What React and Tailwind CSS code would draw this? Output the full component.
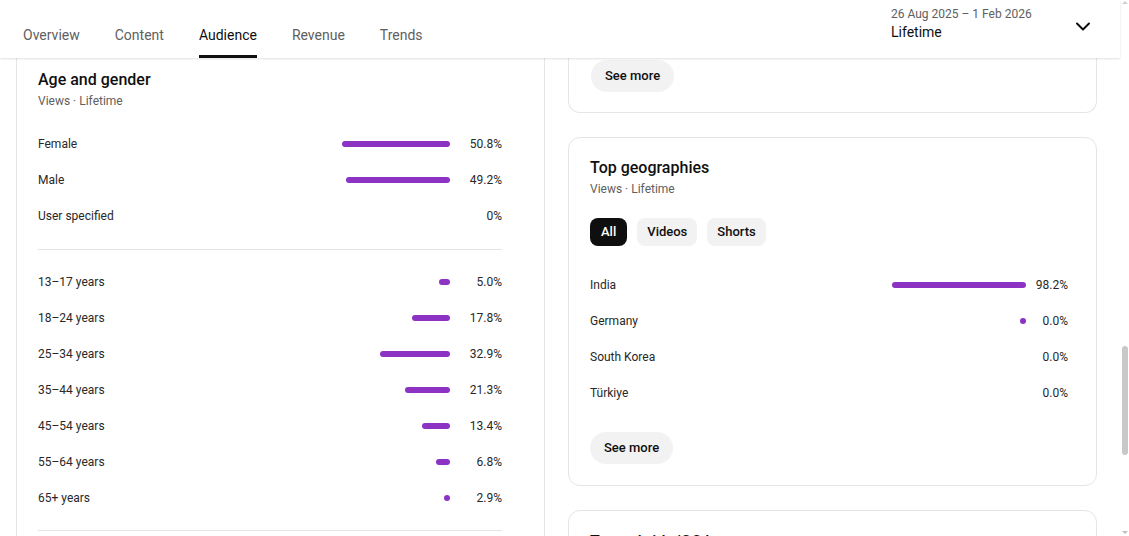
import React from "react";

const gender = [
  { label: "Female", pct: 50.8, text: "50.8%" },
  { label: "Male", pct: 49.2, text: "49.2%" },
  { label: "User specified", pct: 0, text: "0%" },
];

const ages = [
  { label: "13–17 years", pct: 5.0 },
  { label: "18–24 years", pct: 17.8 },
  { label: "25–34 years", pct: 32.9 },
  { label: "35–44 years", pct: 21.3 },
  { label: "45–54 years", pct: 13.4 },
  { label: "55–64 years", pct: 6.8 },
  { label: "65+ years", pct: 2.9 },
];

const geos = [
  { label: "India", w: 134, text: "98.2%" },
  { label: "Germany", w: 6, text: "0.0%" },
  { label: "South Korea", w: 0, text: "0.0%" },
  { label: "Türkiye", w: 0, text: "0.0%" },
];

function Bar({ w }) {
  if (!w) return null;
  return <div className="h-[6px] rounded-full bg-[#8c33c4]" style={{ width: `${w}px` }} />;
}

function AgeRow({ label, w, text }) {
  return (
    <div className="flex h-[36px] items-center text-[12px] text-[#282828]">
      <div className="flex-1">{label}</div>
      <Bar w={w} />
      <div className="w-[52px] text-right">{text}</div>
    </div>
  );
}

function GeoRow({ label, w, text }) {
  return (
    <div className="flex h-[36px] items-center text-[12px] text-[#282828]">
      <div className="flex-1">{label}</div>
      <Bar w={w} />
      <div className="w-[42px] text-right">{text}</div>
    </div>
  );
}

function SeeMore() {
  return (
    <button className="h-8 rounded-full bg-[#f2f2f2] px-[14px] text-[13px] font-medium text-[#0f0f0f]">
      See more
    </button>
  );
}

const tabs = ["Overview", "Content", "Audience", "Revenue", "Trends"];

export default function App() {
  return (
    <div className="flex h-[536px] w-[1129px] overflow-hidden bg-white font-['Roboto',sans-serif] text-[#0f0f0f]">
      <div className="flex w-[1120px] flex-col">
        {/* Header */}
        <div className="relative z-10 flex h-[58px] shrink-0 bg-white shadow-[0_1px_2px_rgba(0,0,0,0.12)]">
          <div className="flex gap-[35px] pl-[23px]">
            {tabs.map((t) => {
              const active = t === "Audience";
              return (
                <div key={t} className="flex flex-col pt-[25px]">
                  <div
                    className={
                      active
                        ? "text-[14px] leading-[20px] text-[#0f0f0f]"
                        : "text-[14px] leading-[20px] text-[#606060]"
                    }
                  >
                    {t}
                  </div>
                  <div className={active ? "mt-[10px] h-[3px] bg-[#0f0f0f]" : "mt-[10px] h-[3px]"} />
                </div>
              );
            })}
          </div>
          <div className="ml-auto flex pr-[25px] pt-[6px]">
            <div className="w-[180px]">
              <div className="text-[12px] leading-[16px] text-[#606060]">26 Aug 2025 – 1 Feb 2026</div>
              <div className="text-[14px] leading-[20px] text-[#0f0f0f]">Lifetime</div>
            </div>
            <div className="mt-[8px] h-6 w-6">
              <svg viewBox="0 0 24 24" width="24" height="24" fill="none" stroke="#0f0f0f" strokeWidth="2" strokeLinecap="round" strokeLinejoin="round">
                <polyline points="6 9.5 12 15.5 18 9.5" />
              </svg>
            </div>
          </div>
        </div>

        {/* Content */}
        <div className="flex gap-[23px] pl-[16px]">
          {/* Left card */}
          <div className="w-[529px] shrink-0 self-start border-x border-[#e5e5e5] pl-[21px] pr-[42px] pt-[10px]">
            <div className="text-[16px] leading-[24px] font-medium">Age and gender</div>
            <div className="mt-[1px] text-[12px] leading-[16px] text-[#606060]">Views · Lifetime</div>
            <div className="mt-[17px]">
              {gender.map((g) => (
                <AgeRow key={g.label} label={g.label} w={g.pct ? Math.max(6, g.pct * 2.12) : 0} text={g.text} />
              ))}
            </div>
            <div className="mt-[15px] h-px bg-[#e5e5e5]" />
            <div className="mt-[14px]">
              {ages.map((a) => (
                <AgeRow key={a.label} label={a.label} w={Math.max(6, a.pct * 2.12)} text={`${a.pct.toFixed(1)}%`} />
              ))}
            </div>
            <div className="mt-[14px] h-px bg-[#e5e5e5]" />
            <div className="h-[40px]" />
          </div>

          {/* Right column */}
          <div className="flex w-[529px] shrink-0 flex-col gap-[24px]">
            <div className="rounded-b-xl border-x border-b border-[#e5e5e5] pb-[20px] pl-[22px] pt-[2px]">
              <SeeMore />
            </div>

            <div className="rounded-xl border border-[#e5e5e5] pb-[21px] pl-[21px] pr-[28px] pt-[18px]">
              <div className="text-[16px] leading-[24px] font-medium">Top geographies</div>
              <div className="mt-[1px] text-[12px] leading-[16px] text-[#606060]">Views · Lifetime</div>
              <div className="mt-[21px] flex gap-[10px]">
                <div className="flex h-[28px] items-center rounded-lg bg-[#0f0f0f] px-[11px] text-[13px] font-medium text-white">All</div>
                <div className="flex h-[28px] items-center rounded-lg bg-[#f2f2f2] px-[10px] text-[13px] font-medium text-[#0f0f0f]">Videos</div>
                <div className="flex h-[28px] items-center rounded-lg bg-[#f2f2f2] px-[10px] text-[13px] font-medium text-[#0f0f0f]">Shorts</div>
              </div>
              <div className="mt-[21px]">
                {geos.map((g) => (
                  <GeoRow key={g.label} {...g} />
                ))}
              </div>
              <div className="mt-[21px]">
                <SeeMore />
              </div>
            </div>

            <div className="h-[80px] rounded-xl border border-[#e5e5e5] pl-[21px] pt-[19px]">
              <div className="text-[16px] leading-[24px] font-medium">Top subtitle/CC languages</div>
            </div>
          </div>
        </div>
      </div>

      {/* Scrollbar */}
      <div className="flex w-[9px] shrink-0 flex-col items-center bg-white">
        <div className="mt-[1px] h-0 w-0 border-x-[3px] border-b-[3px] border-x-transparent border-b-[#d0d0d0]" />
        <div className="mt-[342px] h-[109px] w-[6px] rounded-full bg-[#c8c8c8]" />
        <div className="flex-1" />
        <div className="mb-[2px] h-0 w-0 border-x-[3px] border-t-[3px] border-x-transparent border-t-[#c0c0c0]" />
      </div>
    </div>
  );
}
